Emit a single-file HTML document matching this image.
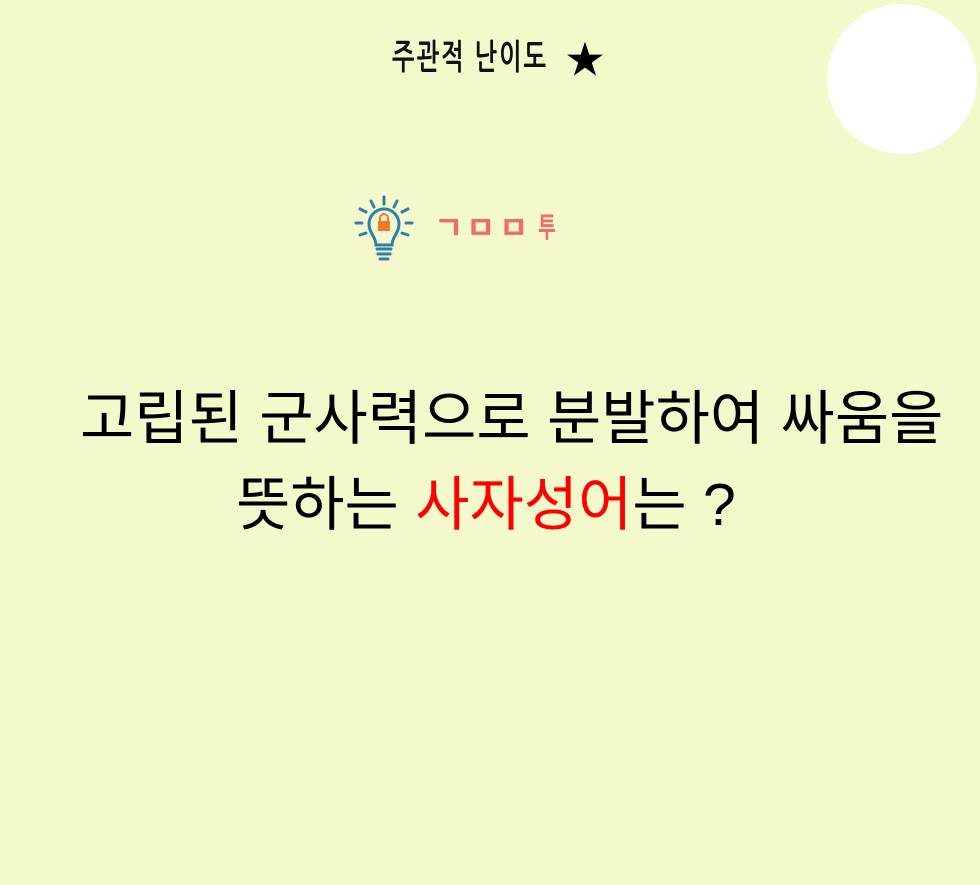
<!DOCTYPE html>
<html><head><meta charset="utf-8">
<style>
html,body{margin:0;padding:0}
body{width:980px;height:885px;background:#f4f9cb;position:relative;overflow:hidden;font-family:"Liberation Sans","Noto Sans CJK KR",sans-serif}
.circle{position:absolute;left:827px;top:4px;width:150px;height:150px;border-radius:50%;background:#fff}
.title{position:absolute;left:392px;top:40px;font-size:24px;font-weight:bold;color:#111;white-space:nowrap;line-height:1;letter-spacing:2px;transform:scaleY(1.45);transform-origin:0 0;font-family:"NanumGothic","Noto Sans CJK KR",sans-serif}
.star{position:absolute;left:566px;top:42px;font-size:38px;color:#000;line-height:1}
.h{position:absolute;top:212px;font-size:32px;font-weight:bold;color:#f26b6b;line-height:1}
.q{position:absolute;font-size:59px;color:#000;white-space:nowrap;line-height:1}
.red{color:#f00}
</style></head><body>
<div class="circle"></div>
<div class="title">주관적 난이도</div>
<div class="star">★</div>
<svg style="position:absolute;left:354px;top:195px" width="60" height="70" viewBox="0 0 60 70">
 <g stroke="#2f7fb0" stroke-width="3" fill="none" stroke-linecap="round">
  <line x1="30" y1="2" x2="30" y2="9"/>
  <line x1="17" y1="6" x2="20" y2="12"/><line x1="43" y1="6" x2="40" y2="12"/>
  <line x1="6" y1="14" x2="12" y2="17"/><line x1="54" y1="14" x2="48" y2="17"/>
  <line x1="2" y1="28" x2="8" y2="28"/><line x1="52" y1="28" x2="58" y2="28"/>
  <line x1="6" y1="40" x2="12" y2="38"/><line x1="54" y1="40" x2="48" y2="38"/>
  <path d="M22 50 C22 42 15 38 15 29 A15 15 0 0 1 45 29 C45 38 38 42 38 50 Z"/>
  <line x1="23" y1="54" x2="37" y2="54"/><line x1="24" y1="59" x2="36" y2="59"/><line x1="26" y1="64" x2="34" y2="64"/>
 </g>
 <path d="M26 26 v-3 a4 4 0 0 1 8 0 v3" stroke="#f07a2a" stroke-width="2" fill="none"/>
 <rect x="24" y="26" width="12" height="10" fill="#f07a2a"/>
</svg>
<div class="h" style="left:434px">ㄱ</div>
<div class="h" style="left:466px">ㅁ</div>
<div class="h" style="left:499px">ㅁ</div>
<div class="h" style="left:538px;font-size:28px;top:214px;transform:scaleX(0.7);transform-origin:0 0">투</div>
<div class="q" style="left:80px;top:390px">고립된 군사력으로 분발하여 싸움을</div>
<div class="q" style="left:236px;top:476px">뜻하는 <span class="red">사자성어</span>는 ?</div>
</body></html>
